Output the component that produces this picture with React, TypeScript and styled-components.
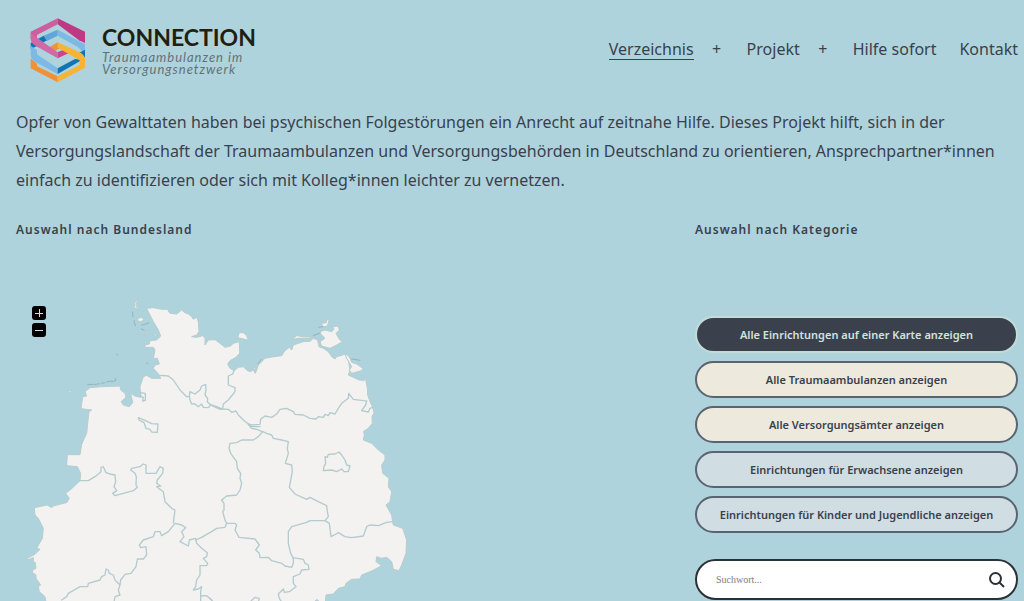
import React from "react";
import styled, { createGlobalStyle } from "styled-components";

const ink = "#39414d";
const sky = "#afd3dc";

const GlobalStyle = createGlobalStyle`
  *, *::before, *::after { box-sizing: border-box; }
  body {
    margin: 0;
    background: ${sky};
    color: ${ink};
    font-family: "Noto Sans", "Open Sans", sans-serif;
  }
`;

const Page = styled.div`
  padding: 0 6px 0 16px;
`;

const Header = styled.header`
  display: flex;
  align-items: center;
  justify-content: space-between;
  height: 98px;
`;

const Brand = styled.a`
  display: flex;
  align-items: center;
  gap: 12px;
  padding-left: 9px;
  color: #221f12;
  text-decoration: none;
  font-family: Lato, sans-serif;
`;

const BrandText = styled.span`
  display: flex;
  flex-direction: column;
`;

const BrandName = styled.span`
  font-size: 23px;
  line-height: 28px;
  font-weight: 700;
`;

const BrandClaim = styled.span`
  font-size: 13px;
  line-height: 12px;
  font-style: italic;
  letter-spacing: 1px;
  color: #5f7278;
`;

const Nav = styled.nav`
  display: flex;
  align-items: center;
  gap: 23px;
  font-size: 16px;
  line-height: 24px;
`;

const NavGroup = styled.div`
  display: flex;
  align-items: center;
  gap: 16px;
`;

const NavLink = styled.a<{ $current?: boolean }>`
  color: ${ink};
  text-decoration: none;
  line-height: 20px;
  border-bottom: 1px solid ${(p) => (p.$current ? ink : "transparent")};
`;

const Expand = styled.button`
  width: 14px;
  padding: 0;
  border: 0;
  background: none;
  color: ${ink};
  font: inherit;
  line-height: 20px;
`;

const Intro = styled.p`
  margin: 10px 0 0;
  font-size: 16px;
  line-height: 29px;
`;

const Columns = styled.main`
  display: grid;
  grid-template-columns: minmax(0, 1fr) 323px;
  gap: 32px;
  margin-top: 25px;
`;

const Heading = styled.h2`
  margin: 0;
  font-size: 12px;
  line-height: 20px;
  font-weight: 600;
  letter-spacing: 1px;
`;

const MapArea = styled.div`
  position: relative;
  margin-top: 50px;
  padding-left: 4px;
`;

const MapDrawing = styled.svg`
  display: block;
  width: 400px;
  max-width: 100%;
  height: auto;
`;

const ZoomControls = styled.div`
  position: absolute;
  top: 16px;
  left: 16px;
  display: flex;
  flex-direction: column;
  gap: 3px;
`;

const ZoomButton = styled.button`
  display: flex;
  align-items: center;
  justify-content: center;
  width: 14px;
  height: 14px;
  padding: 0;
  border: 0;
  border-radius: 3px;
  background: #000;
  color: #ddd;
`;

const Choices = styled.div`
  display: flex;
  flex-direction: column;
  gap: 8px;
  margin-top: 76px;
`;

const tones = {
  dark: { bg: "#3a414d", fg: "#d1e4dd", line: "#c3dcd8" },
  sand: { bg: "#ede9dc", fg: "#39414d", line: "#596470" },
  mist: { bg: "#d0dde3", fg: "#39414d", line: "#596470" },
};

const Choice = styled.button<{ $tone: keyof typeof tones }>`
  height: 37px;
  padding: 0 16px;
  border: 2px solid ${(p) => tones[p.$tone].line};
  border-radius: 19px;
  background: ${(p) => tones[p.$tone].bg};
  color: ${(p) => tones[p.$tone].fg};
  font: inherit;
  font-size: 11px;
  font-weight: 600;
  white-space: nowrap;
`;

const Search = styled.form`
  display: flex;
  align-items: center;
  height: 41px;
  margin-top: 26px;
  padding: 0 11px 0 19px;
  border: 2px solid #2c3136;
  border-radius: 21px;
  background: #fff;
`;

const SearchInput = styled.input`
  flex: 1;
  min-width: 0;
  padding: 0;
  border: 0;
  outline: 0;
  background: none;
  font-family: "Liberation Serif", serif;
  font-size: 10px;
  color: #333;
  &::placeholder {
    color: #7d7d7d;
    opacity: 1;
  }
`;

const SearchButton = styled.button`
  display: flex;
  padding: 0;
  border: 0;
  background: none;
  color: #2c3136;
`;

const Logo = () => (
  <svg width="65" height="70" viewBox="0 -3 195 210" aria-hidden="true">
    <path d="M17 84 56 62 66 76 38 92 17 102Z" fill="#1374b5" />
    <path d="M56 62 98 44 98 62 66 78Z" fill="#5fa6da" />
    <path d="M98 44 180 88V116L158 96 98 62Z" fill="#7db9e5" />
    <path d="M17 50 98 10V28L36 60 36 82 17 72Z" fill="#cb5f9f" />
    <path d="M98 10 180 50V84L162 76 98 28Z" fill="#bd3983" />
    <path d="M60 104 98 82 106 98 76 116Z" fill="#f0913a" />
    <path d="M17 55 36 68 98 112V130L34 94Q17 84 17 70Z" fill="#d06aa6" />
    <path d="M98 112 126 100 140 110 98 130Z" fill="#c8458f" />
    <path d="M17 92 36 106V118L98 160V177L30 140Q17 132 17 118Z" fill="#7db9e5" />
    <path d="M98 160 150 132 172 134 98 177Z" fill="#1374b5" />
    <path d="M150 120 180 104V126L168 134Z" fill="#1374b5" />
    <path d="M17 130 36 146V154L98 184V202L17 160Z" fill="#f0913a" />
    <path d="M98 82 168 114Q180 122 180 134V158L98 202V184L164 150V136L98 98Z" fill="#f8b334" />
  </svg>
);

const mainland =
  "M380 55 400 53 425 58 442 58 450 70 470 72 485 60 495 68 505 72 515 80 520 88 530 82 535 95 537 125 530 135 515 140 530 142 548 137 555 145 555 165 565 150 585 149 600 160 615 172 632 168 640 160 658 155 659 190 648 202 630 212 623 222 630 235 642 242 655 232 670 230 680 240 690 245 700 240 706 250 710 240 715 225 725 215 735 205 755 201 785 197 795 182 808 172 815 180 820 165 850 155 870 154 880 145 893 150 897 170 910 175 925 185 935 200 945 207 950 200 962 197 975 192 985 210 990 240 985 255 1000 262 1015 269 1030 272 1037 268 1042 295 1043 315 1050 335 1058 352 1062 368 1056 380 1057 400 1045 415 1031 424 1033 435 1030 450 1055 460 1075 480 1095 495 1095 510 1085 525 1088 550 1107 565 1105 590 1115 605 1110 635 1098 645 1115 675 1118 695 1120 705 1148 715 1160 750 1158 790 1145 825 1137 842 1120 838 1115 815 1100 802 1085 805 1070 800 1068 815 1085 827 1055 843 1025 855 1020 867 995 868 978 880 975 890 955 895 940 912 918 915 916 936 900 936 890 928 882 936 78 936 75 920 58 905 55 890 62 885 48 865 48 855 37 848 38 840 48 835 46 818 40 815 40 803 22 810 22 805 45 793 60 778 50 775 67 745 70 715 55 685 45 675 43 653 82 645 95 653 100 648 130 640 140 638 148 625 137 610 155 596 180 572 182 550 172 530 140 527 142 494 180 494 187 450 185 462 200 430 203 400 207 365 215 360 183 356 188 320 200 318 195 305 210 293 245 290 300 288 302 300 315 310 318 322 303 335 310 345 328 350 338 338 332 310 345 318 362 322 360 290 370 260 380 256 395 265 422 265 418 255 400 235 405 225 418 222 412 205 400 205 405 180 400 172 375 172 375 165 388 162 390 152 410 150 422 138 415 120 400 95 385 65Z";

const islands = [
  "M355 22 345 38 342 52 356 59 348 48Z",
  "M355 85 365 82 372 90 362 95 353 92Z",
  "M375 125 383 128 378 132Z",
  "M398 133 410 132 408 138Z",
  "M143 305 158 300 150 308Z",
  "M653 142 658 128 670 128 680 137 685 150Z",
  "M905 100 920 98 918 90 928 90 922 108 910 110Z",
  "M900 125 915 120 935 125 942 118 938 110 955 108 958 120 948 130 958 148 967 155 950 165 930 175 905 168 900 155 915 145 905 135Z",
  "M818 148 830 137 850 140 875 140 897 131 870 144 835 145Z",
  "M975 190 988 200 995 217 1010 222 1028 235 1025 242 995 250 988 240 995 230 980 205Z",
  "M700 235 710 230 705 238Z",
];

const sandbanks =
  "M338 66 339 80M342 92 346 107M364 117 372 120M365 105 378 102 386 98M380 218 384 222M203 284 218 283M222 284 238 281M245 280 254 278M260 276 274 273M276 275 288 271 286 266M289 192 293 195M714 222 724 208M896 112 908 110M995 207 1020 211M880 137 900 129";

const borders = [
  "M422 256 445 258 460 270 480 300 500 320 508 320M572 345 600 358 608 357 590 350 570 343",
  "M508 318 510 305 525 312 540 300 545 288 557 283 558 300 555 315 563 325 562 335 572 345 565 353 550 352 545 342 535 350 525 342 515 342 510 330Z",
  "M642 242 638 252 625 258 625 285 645 293 645 305 625 330 610 342 608 357 625 358 635 367 648 363 655 375 670 390 685 402 695 405 720 403 722 388 735 378 755 382 770 372 780 358 800 355 820 365 825 373 850 375 870 385 888 387 895 380 910 382 915 373 925 377 930 368 945 372 955 355 965 340 985 325 986 310 1000 328 1030 332 1040 333 1037 345 1025 362 1045 366 1050 355 1058 352",
  "M685 402 695 415 710 418 728 425 715 440 700 450 665 450 650 458 630 460 627 475 632 490 650 515 652 535 662 550 660 565 665 580 660 600 650 615 620 618 605 630 612 640 612 660 608 665 615 690 620 700 615 712 590 715 575 725 560 733 545 742 527 750",
  "M685 402 690 410 720 410M728 425 740 430 755 435 760 445 785 450 805 455 802 475 805 490 796 520 815 525 817 545 808 592 825 612 860 628 870 622 895 635 920 647 922 665 925 680 915 692 870 692 860 697 815 710 805 725 805 760 812 790 820 805",
  "M915 692 928 700 933 740 948 732 955 728 975 740 995 743 1030 738 1040 710 1050 705 1075 707 1100 697 1118 695",
  "M620 700 645 700 650 705 645 720 657 742 705 747 718 765 707 780 718 790 720 803 745 802 755 812 785 820 795 828 815 832 820 820 820 803 850 808 855 820 865 825 867 838 845 840 840 852 820 860 820 880 828 890 808 905 793 907 790 897 775 912 778 925 785 936",
  "M570 925 580 936M693 933 705 922 718 925 715 936",
  "M182 572 205 572 225 560 243 545 243 532 250 530 258 548 270 552 285 555 287 575 282 590 290 602 278 610 285 617 310 610 340 602 352 592 348 585 349 560 345 550 332 540 335 535 360 530 370 522 378 525 378 550 408 550 420 530 430 535 428 550 412 570 410 580 422 588 410 590 430 605 435 635 455 655 465 660 460 698",
  "M465 700 445 725 425 737 420 725 405 725 400 740 370 750 358 765 362 773 378 770 380 795 370 807 352 807 348 830 333 850 315 853 302 870 300 883",
  "M125 930 140 920 145 910 180 890 203 890 205 880 240 870 245 860 255 855 258 837 265 840 268 850 280 855 285 870 300 885 295 900 300 915 285 920 282 936",
  "M465 700 485 705 497 713 485 725 492 740 480 755 505 768 508 750 527 745 530 760 545 775 562 788 560 800 550 805 563 820 560 827 540 827 540 855 530 870 527 890 520 900 535 897 545 890 542 905 542 936M542 918 560 917 575 930",
  "M355 383 357 390 372 398 378 415 390 418 395 426 412 427 414 402 395 401 375 391Z",
  "M362 308 376 310 376 331 368 333 370 322 362 320Z",
  "M910 542 912 530 917 520 915 500 922 502 925 493 945 492 957 486 965 495 975 510 980 525 990 528 985 545 972 545 965 537 950 545 935 540Z",
];

const GermanyMap = () => (
  <MapDrawing viewBox="0 0 1200 933" role="img" aria-label="Karte der Bundesländer">
    <g fill="#f3f2f0" stroke="#b7cdce" strokeWidth="3" strokeLinejoin="round" strokeLinecap="round">
      <path d={mainland} />
      {islands.map((d) => (
        <path key={d} d={d} />
      ))}
      <path d={sandbanks} fill="none" stroke="#94b4b8" />
      <g fill="none" stroke="#b3cbce" strokeWidth="4">
        {borders.map((d) => (
          <path key={d} d={d} />
        ))}
      </g>
    </g>
  </MapDrawing>
);

const choices: { label: string; tone: keyof typeof tones }[] = [
  { label: "Alle Einrichtungen auf einer Karte anzeigen", tone: "dark" },
  { label: "Alle Traumaambulanzen anzeigen", tone: "sand" },
  { label: "Alle Versorgungsämter anzeigen", tone: "sand" },
  { label: "Einrichtungen für Erwachsene anzeigen", tone: "mist" },
  { label: "Einrichtungen für Kinder und Jugendliche anzeigen", tone: "mist" },
];

export default function App() {
  return (
    <>
      <GlobalStyle />
      <Page>
        <Header>
          <Brand href="#">
            <Logo />
            <BrandText>
              <BrandName>CONNECTION</BrandName>
              <BrandClaim>
                Traumaambulanzen im
                <br />
                Versorgungsnetzwerk
              </BrandClaim>
            </BrandText>
          </Brand>
          <Nav>
            <NavGroup>
              <NavLink href="#verzeichnis" $current>Verzeichnis</NavLink>
              <Expand aria-label="Verzeichnis öffnen">+</Expand>
            </NavGroup>
            <NavGroup>
              <NavLink href="#projekt">Projekt</NavLink>
              <Expand aria-label="Projekt öffnen">+</Expand>
            </NavGroup>
            <NavLink href="#hilfe">Hilfe sofort</NavLink>
            <NavLink href="#kontakt">Kontakt</NavLink>
          </Nav>
        </Header>
        <Intro>
          Opfer von Gewalttaten haben bei psychischen Folgestörungen ein Anrecht auf zeitnahe Hilfe. Dieses Projekt
          hilft, sich in der Versorgungslandschaft der Traumaambulanzen und Versorgungsbehörden in Deutschland zu
          orientieren, Ansprechpartner*innen einfach zu identifizieren oder sich mit Kolleg*innen leichter zu vernetzen.
        </Intro>
        <Columns>
          <section>
            <Heading>Auswahl nach Bundesland</Heading>
            <MapArea>
              <GermanyMap />
              <ZoomControls>
                <ZoomButton aria-label="Vergrößern">
                  <svg width="10" height="10" viewBox="0 0 10 10" stroke="currentColor">
                    <path d="M1 5.5H9M5.5 1V9" />
                  </svg>
                </ZoomButton>
                <ZoomButton aria-label="Verkleinern">
                  <svg width="10" height="10" viewBox="0 0 10 10" stroke="currentColor">
                    <path d="M1 5.5H9" />
                  </svg>
                </ZoomButton>
              </ZoomControls>
            </MapArea>
          </section>
          <section>
            <Heading>Auswahl nach Kategorie</Heading>
            <Choices>
              {choices.map((c) => (
                <Choice key={c.label} $tone={c.tone}>{c.label}</Choice>
              ))}
            </Choices>
            <Search>
              <SearchInput type="search" placeholder="Suchwort..." aria-label="Suchwort" />
              <SearchButton aria-label="Suchen">
                <svg width="16" height="16" viewBox="0 0 16 16" fill="none" stroke="currentColor" strokeWidth="2">
                  <circle cx="6.5" cy="6.5" r="5.5" />
                  <path d="M10.5 10.5 15 15" />
                </svg>
              </SearchButton>
            </Search>
          </section>
        </Columns>
      </Page>
    </>
  );
}
